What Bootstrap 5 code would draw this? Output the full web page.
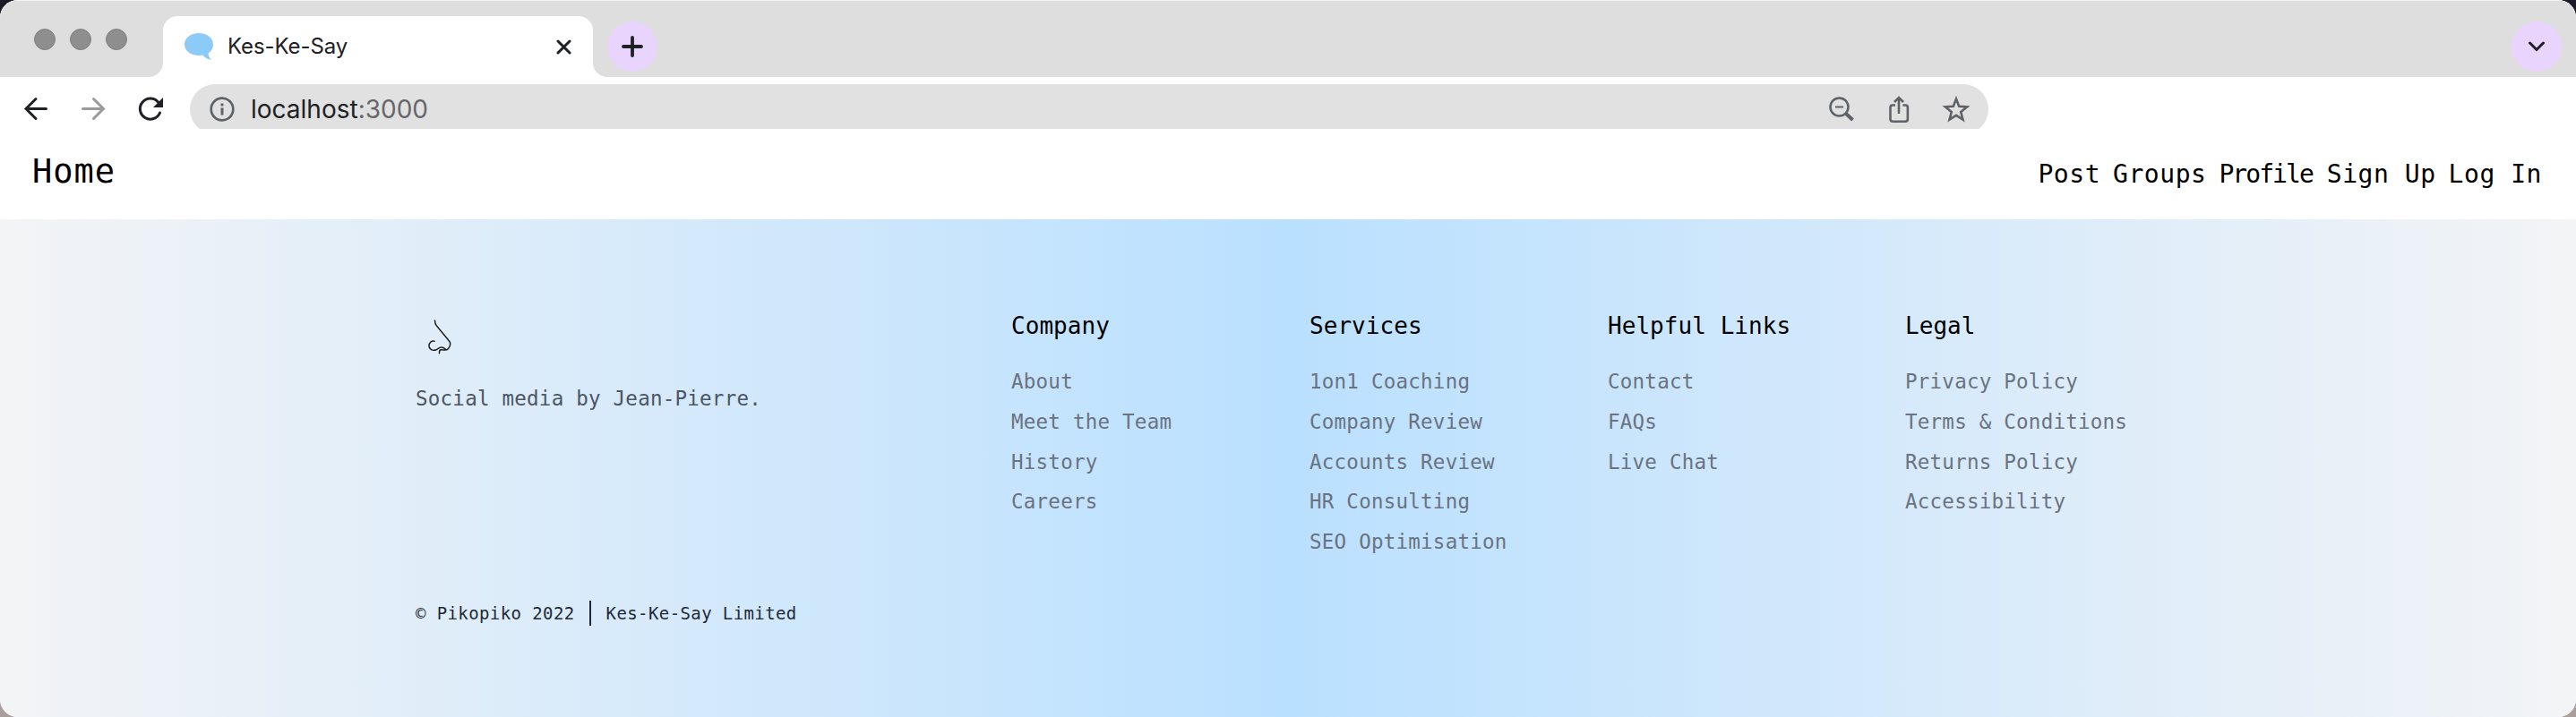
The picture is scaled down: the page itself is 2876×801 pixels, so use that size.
<!DOCTYPE html>
<html lang="en">
<head>
<meta charset="utf-8">
<title>Kes-Ke-Say</title>
<link href="https://cdn.jsdelivr.net/npm/bootstrap@5.3.0/dist/css/bootstrap.min.css" rel="stylesheet">
<style>
body{background:linear-gradient(#1b1a26 50%,#a89f9c 50%);height:801px;overflow:hidden}
.window{height:801px;border-radius:20px 20px 20px 20px;overflow:hidden;background:#fff;font-family:"DejaVu Sans Mono",monospace;color:#000}
.window svg{display:block;flex:none}
.tabstrip{height:86px;background:#fff;font-family:Inter,sans-serif}
.strip-l{width:182px;background:#dedede;border-bottom-right-radius:16px;border-top:1px solid #f4f4f4;padding:31px 0 0 38px;gap:16px}
.dot{width:24px;height:24px;border-radius:50%;background:#8e8e8e;border:1px solid #808080}
.tab-wrap{width:480px;background:#dedede;border-top:1px solid #f4f4f4;padding-top:17px}
.tab-on{height:68px;background:#fff;border-radius:16px 16px 0 0;padding:0 24px 0 24px;color:#202124}
.tab-name{font-size:24px;line-height:30px;margin-left:16px;letter-spacing:-.1px}
.strip-r{background:#dedede;border-bottom-left-radius:16px;border-top:1px solid #f4f4f4;padding:23px 16px 0 16px}
.round{width:56px;height:56px;border-radius:50%;background:#e8d4fd}
.toolbar{height:58px;padding:8px 0 0 24px;overflow:hidden;font-family:Inter,sans-serif}
.address{width:2008px;height:56px;border-radius:28px;background:#e1e1e1;padding:0 21px 0 22px;flex:none}
.url{font-size:28px;line-height:36px;margin-left:18px;color:#202124}
.url span{color:#66676b}
.site-nav{height:101px;padding:0 38px 0 36px}
.site-nav a{color:#000;text-decoration:none;white-space:nowrap}
.home{font-size:37px;letter-spacing:.95px;line-height:42px;padding-top:27px}
.links{font-size:28px;letter-spacing:.54px;line-height:36px;padding-top:33px;gap:14px}
.links .tight{letter-spacing:-1.95px;margin-right:2px}
.foot{height:556px;padding:98px 464px 0;background:linear-gradient(90deg,#f3f4f6,#bae0ff 50%,#f3f4f6)}
.foot-grid{display:grid;grid-template-columns:665px 333px 333px 332px 1fr;height:306px}
.tagline{font-size:22.5px;letter-spacing:.24px;line-height:32px;color:#4b5563;margin-top:32px}
.foot h2{font-size:26px;letter-spacing:.05px;line-height:32px;margin:5px 0 24px;font-weight:400;white-space:nowrap}
.foot li{font-size:22.5px;letter-spacing:.24px;line-height:44.75px;color:#6b7280;white-space:nowrap}
.legal-line{font-size:19px;letter-spacing:.4px;line-height:28px;color:#1f2937;padding-top:22px}
.bar-sep{width:2px;height:28px;background:#1f2937;margin:0 17px 0 16px}
.nose{margin:14px 0 0 14px}
</style>
</head>
<body>
<div class="window d-flex flex-column">
  <div class="tabstrip d-flex flex-shrink-0">
    <div class="strip-l d-flex align-items-start"><span class="dot"></span><span class="dot"></span><span class="dot"></span></div>
    <div class="tab-wrap"><div class="tab-on d-flex align-items-center">
      <svg width="32" height="32" viewBox="0 0 32 32"><path d="M16 1C7 1 0 6.500 0 13.500S7 26 16 26c1.500 0 2.500 0 4-.4 3 3 6 5 10 5.500-2-2-3.500-5-3.500-7.500C30 21.500 32 17.500 32 13.500 32 6.500 25 1 16 1Z" fill="#8ccaf8"/></svg>
      <span class="tab-name">Kes-Ke-Say</span>
      <svg class="ms-auto" width="17" height="17" viewBox="0 0 17 17"><path d="M2 2l13 13m0-13l-13 13" stroke="#202124" stroke-width="3" stroke-linecap="round"/></svg>
    </div></div>
    <div class="strip-r d-flex flex-grow-1 justify-content-between align-items-start">
      <div class="round d-flex align-items-center justify-content-center"><svg width="24" height="24" viewBox="0 0 24 24"><path d="M12 2v20M2 12h20" stroke="#202124" stroke-width="3.800" stroke-linecap="round"/></svg></div>
      <div class="round d-flex align-items-center justify-content-center"><svg width="18" height="12" viewBox="0 0 18 12"><path d="M1.500 2L9 9.500 16.500 2" fill="none" stroke="#202124" stroke-width="3" stroke-linecap="round"/></svg></div>
    </div>
  </div>
  <div class="toolbar d-flex flex-shrink-0 align-items-start">
    <svg class="mt-3" width="188" height="28" viewBox="24 110 188 28" fill="none" stroke-width="3" stroke-linecap="round" overflow="visible">
      <path d="M51.500 121.500H29M40 110.500l-11 11 11 11" stroke="#202124"/>
      <path d="M92.500 121.500h23M104.500 110.500l11 11-11 11" stroke="#9b9b9b"/>
      <path d="M178.500 126a11.500 11.500 0 1 1-2-12" stroke="#202124"/><path d="M182 109v11h-11Z" fill="#202124"/>
    </svg>
    <div class="address d-flex align-items-center">
      <svg width="28" height="28" viewBox="0 0 28 28"><circle cx="14" cy="14" r="12.300" fill="none" stroke="#5f6368" stroke-width="2.700"/><path d="M14 7.500v3M14 12.500v8" stroke="#5f6368" stroke-width="3"/></svg>
      <span class="url">localhost<span>:3000</span></span>
      <svg class="ms-auto" width="158" height="30" viewBox="2041 107 158 30" fill="none" stroke="#5f6368" stroke-width="2.600">
        <circle cx="2053.500" cy="119.500" r="10"/><path d="M2049 119.500h9" stroke-width="2"/><path d="M2061 127l7.500 7" stroke-width="4"/>
        <path d="M2116 117.500h-3q-2.500 0-2.500 2.500v13q0 2.700 2.700 2.700h14q2.700 0 2.700-2.700V120q0-2.500-2.500-2.500h-3M2120 127v-17M2115 114l5-5 5 5"/>
        <path d="M2184 110.500l3.200 8.300 9 .6-7 5.600 2.300 8.700-7.500-4.800-7.500 4.800 2.300-8.700-7-5.600 9-.6Z"/>
      </svg>
    </div>
  </div>
  <nav class="site-nav d-flex justify-content-between flex-shrink-0">
    <a class="home" href="#">Home</a>
    <div class="links d-flex"><a href="#">Post</a><a href="#">Groups</a><a class="tight" href="#">Profile</a><a href="#">Sign Up</a><a href="#">Log In</a></div>
  </nav>
  <footer class="foot flex-shrink-0">
    <div class="foot-grid">
      <div>
        <svg class="nose" width="26" height="40" viewBox="479 357 26 40" fill="none" stroke="#222" stroke-width="1.500" stroke-linecap="round" stroke-linejoin="round"><path d="M486.500 358c0 2 0 4 2 6l14 17c2 2.500 1 6-1 8.500-2.500 3-5 1-8 1.200-1.800.2-2.200 1.800-2 4M486 381.300c-3-1-6 1.500-6 5 0 4 4 6 8 4.500 2-.8 3-3 6-2.800 2 .1 3 1 4.500 2.200"/></svg>
        <div class="tagline">Social media by Jean-Pierre.</div>
      </div>
      <div><h2>Company</h2><ul class="list-unstyled"><li>About</li><li>Meet the Team</li><li>History</li><li>Careers</li></ul></div>
      <div><h2>Services</h2><ul class="list-unstyled"><li>1on1 Coaching</li><li>Company Review</li><li>Accounts Review</li><li>HR Consulting</li><li>SEO Optimisation</li></ul></div>
      <div><h2>Helpful Links</h2><ul class="list-unstyled"><li>Contact</li><li>FAQs</li><li>Live Chat</li></ul></div>
      <div><h2>Legal</h2><ul class="list-unstyled"><li>Privacy Policy</li><li>Terms &amp; Conditions</li><li>Returns Policy</li><li>Accessibility</li></ul></div>
    </div>
    <div class="legal-line d-flex align-items-center"><span>© Pikopiko 2022</span><span class="bar-sep"></span><span>Kes-Ke-Say Limited</span></div>
  </footer>
</div>
<script src="https://cdn.jsdelivr.net/npm/bootstrap@5.3.0/dist/js/bootstrap.bundle.min.js"></script>
</body>
</html>
